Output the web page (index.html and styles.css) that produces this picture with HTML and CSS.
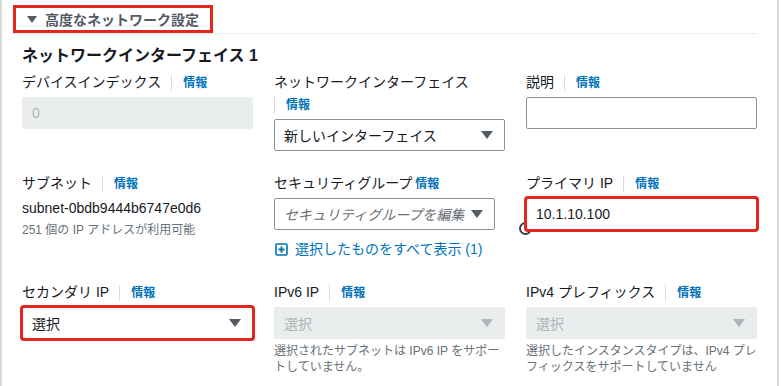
FILE: index.html
```html
<!DOCTYPE html>
<html lang="ja">
<head>
  <meta charset="UTF-8">
  <meta name="viewport" content="width=device-width, initial-scale=1.0">
  <title>高度なネットワーク設定</title>
  <link rel="stylesheet" href="styles.css">
</head>
<body>
  <div class="panel">
    <div class="section">
      <div class="section-head">
        <div class="expander"><span class="arrow"></span>高度なネットワーク設定</div>
      </div>

      <div class="section-body">
        <div class="title">ネットワークインターフェイス 1</div>

        <div class="grid">
          <!-- row 1 -->
          <div class="field">
            <div class="label"><span class="label-text">デバイスインデックス</span><a class="info">情報</a></div>
            <div class="input disabled">0</div>
          </div>
          <div class="field">
            <div class="label"><span class="label-text">ネットワークインターフェイス</span><a class="info">情報</a></div>
            <div class="input select"><span>新しいインターフェイス</span><span class="caret"></span></div>
          </div>
          <div class="field">
            <div class="label"><span class="label-text">説明</span><a class="info">情報</a></div>
            <div class="input"></div>
          </div>

          <!-- row 2 -->
          <div class="field">
            <div class="label"><span class="label-text">サブネット</span><a class="info">情報</a></div>
            <div class="value">subnet-0bdb9444b6747e0d6</div>
            <div class="hint">251 個の IP アドレスが利用可能</div>
          </div>
          <div class="field">
            <div class="label"><span class="label-text plain">セキュリティグループ</span><a class="info plain">情報</a></div>
            <div class="input select narrow"><span class="placeholder">セキュリティグループを編集</span><span class="caret"></span></div>
            <a class="show-all">
              <svg width="13" height="13" viewBox="0 0 13 13">
                <rect x="1" y="1" width="11" height="11" rx="1" fill="none" stroke="#0073bb" stroke-width="1.6"/>
                <path d="M6.5 3.5v6M3.5 6.5h6" stroke="#0073bb" stroke-width="2"/>
              </svg>
              選択したものをすべて表示 (1)
            </a>
          </div>
          <div class="field">
            <div class="label"><span class="label-text">プライマリ IP</span><a class="info">情報</a></div>
            <div class="input marked">10.1.10.100</div>
            <span class="cursor-ring"></span>
          </div>

          <!-- row 3 -->
          <div class="field">
            <div class="label"><span class="label-text">セカンダリ IP</span><a class="info">情報</a></div>
            <div class="input select marked"><span>選択</span><span class="caret"></span></div>
          </div>
          <div class="field">
            <div class="label"><span class="label-text">IPv6 IP</span><a class="info">情報</a></div>
            <div class="input select disabled"><span>選択</span><span class="caret"></span></div>
            <div class="hint">選択されたサブネットは IPv6 IP をサポートしていません。</div>
          </div>
          <div class="field">
            <div class="label"><span class="label-text">IPv4 プレフィックス</span><a class="info">情報</a></div>
            <div class="input select disabled"><span>選択</span><span class="caret"></span></div>
            <div class="hint">選択したインスタンスタイプは、IPv4 プレフィックスをサポートしていません</div>
          </div>
        </div>
      </div>
    </div>
  </div>
</body>
</html>
```

FILE: styles.css
```css
* {
  margin: 0;
  padding: 0;
  box-sizing: border-box;
}

body {
  font-family: "Liberation Sans", "Noto Sans CJK JP", sans-serif;
  background-color: #fff;
  color: #16191f;
  overflow: hidden;
}

.panel {
  width: 779px;
  height: 386px;
  border-left: 2px solid #d5dbdb;
  border-right: 2px solid #d5dbdb;
}

.section {
  margin: 0 20px 0 11px;
}

.section-head {
  padding-top: 5px;
  border-bottom: 1px solid #eaeded;
}

.expander {
  width: 200px;
  height: 28px;
  border: 3px solid #e3261c;
  display: flex;
  align-items: center;
  padding-left: 11px;
  font-size: 14px;
  font-weight: bold;
  color: #545b64;
}

/* expand arrow */
.arrow {
  width: 0;
  height: 0;
  border-left: 5px solid transparent;
  border-right: 5px solid transparent;
  border-top: 7px solid #545b64;
  margin-right: 8px;
}

.section-body {
  padding-left: 9px;
}

.title {
  margin-top: 11px;
  font-size: 16px;
  line-height: 22px;
  font-weight: bold;
}

.grid {
  margin-top: 4px;
  display: grid;
  grid-template-columns: repeat(3, 1fr);
  column-gap: 21px;
  row-gap: 21px;
  align-items: start;
}

.field {
  position: relative;
}

.label {
  font-size: 14px;
  line-height: 22px;
  margin-bottom: 4px;
}

.label-text {
  margin-right: 10px;
}

.label-text.plain {
  margin-right: 3px;
}

.info {
  display: inline-block;
  border-left: 1px solid #d5dbdb;
  padding-left: 11px;
  font-size: 12px;
  line-height: 16px;
  font-weight: bold;
  color: #0073bb;
  vertical-align: middle;
}

.info.plain {
  border-left: none;
  padding-left: 0;
}

.input {
  position: relative;
  z-index: 1;
  height: 32px;
  border: 1px solid #879596;
  border-radius: 2px;
  background: #fff;
  padding: 0 9px;
  display: flex;
  align-items: center;
  font-size: 14px;
}

.input.select {
  justify-content: space-between;
  padding-right: 11px;
}

.input.narrow {
  width: calc(100% - 10px);
}

.input.disabled {
  background: #eaeded;
  border-color: #eaeded;
  color: #aab7b8;
}

.input.marked {
  outline: 3px solid #e3261c;
  outline-offset: -1px;
}

.caret {
  width: 0;
  height: 0;
  border-left: 6px solid transparent;
  border-right: 6px solid transparent;
  border-top: 8px solid #545b64;
}

.disabled .caret {
  border-top-color: #aab7b8;
}

.placeholder {
  font-style: italic;
  color: #687078;
}

.value {
  font-size: 14px;
  line-height: 20px;
}

.hint {
  margin-top: 4px;
  font-size: 12px;
  line-height: 16px;
  color: #687078;
}

.show-all {
  display: flex;
  align-items: center;
  gap: 7px;
  margin-top: 8px;
  padding-left: 1px;
  font-size: 14px;
  line-height: 22px;
  color: #0073bb;
}

.cursor-ring {
  position: absolute;
  left: -7px;
  top: 50px;
  width: 13px;
  height: 13px;
  border: 2px solid #3a3f45;
  border-radius: 50%;
}
```
